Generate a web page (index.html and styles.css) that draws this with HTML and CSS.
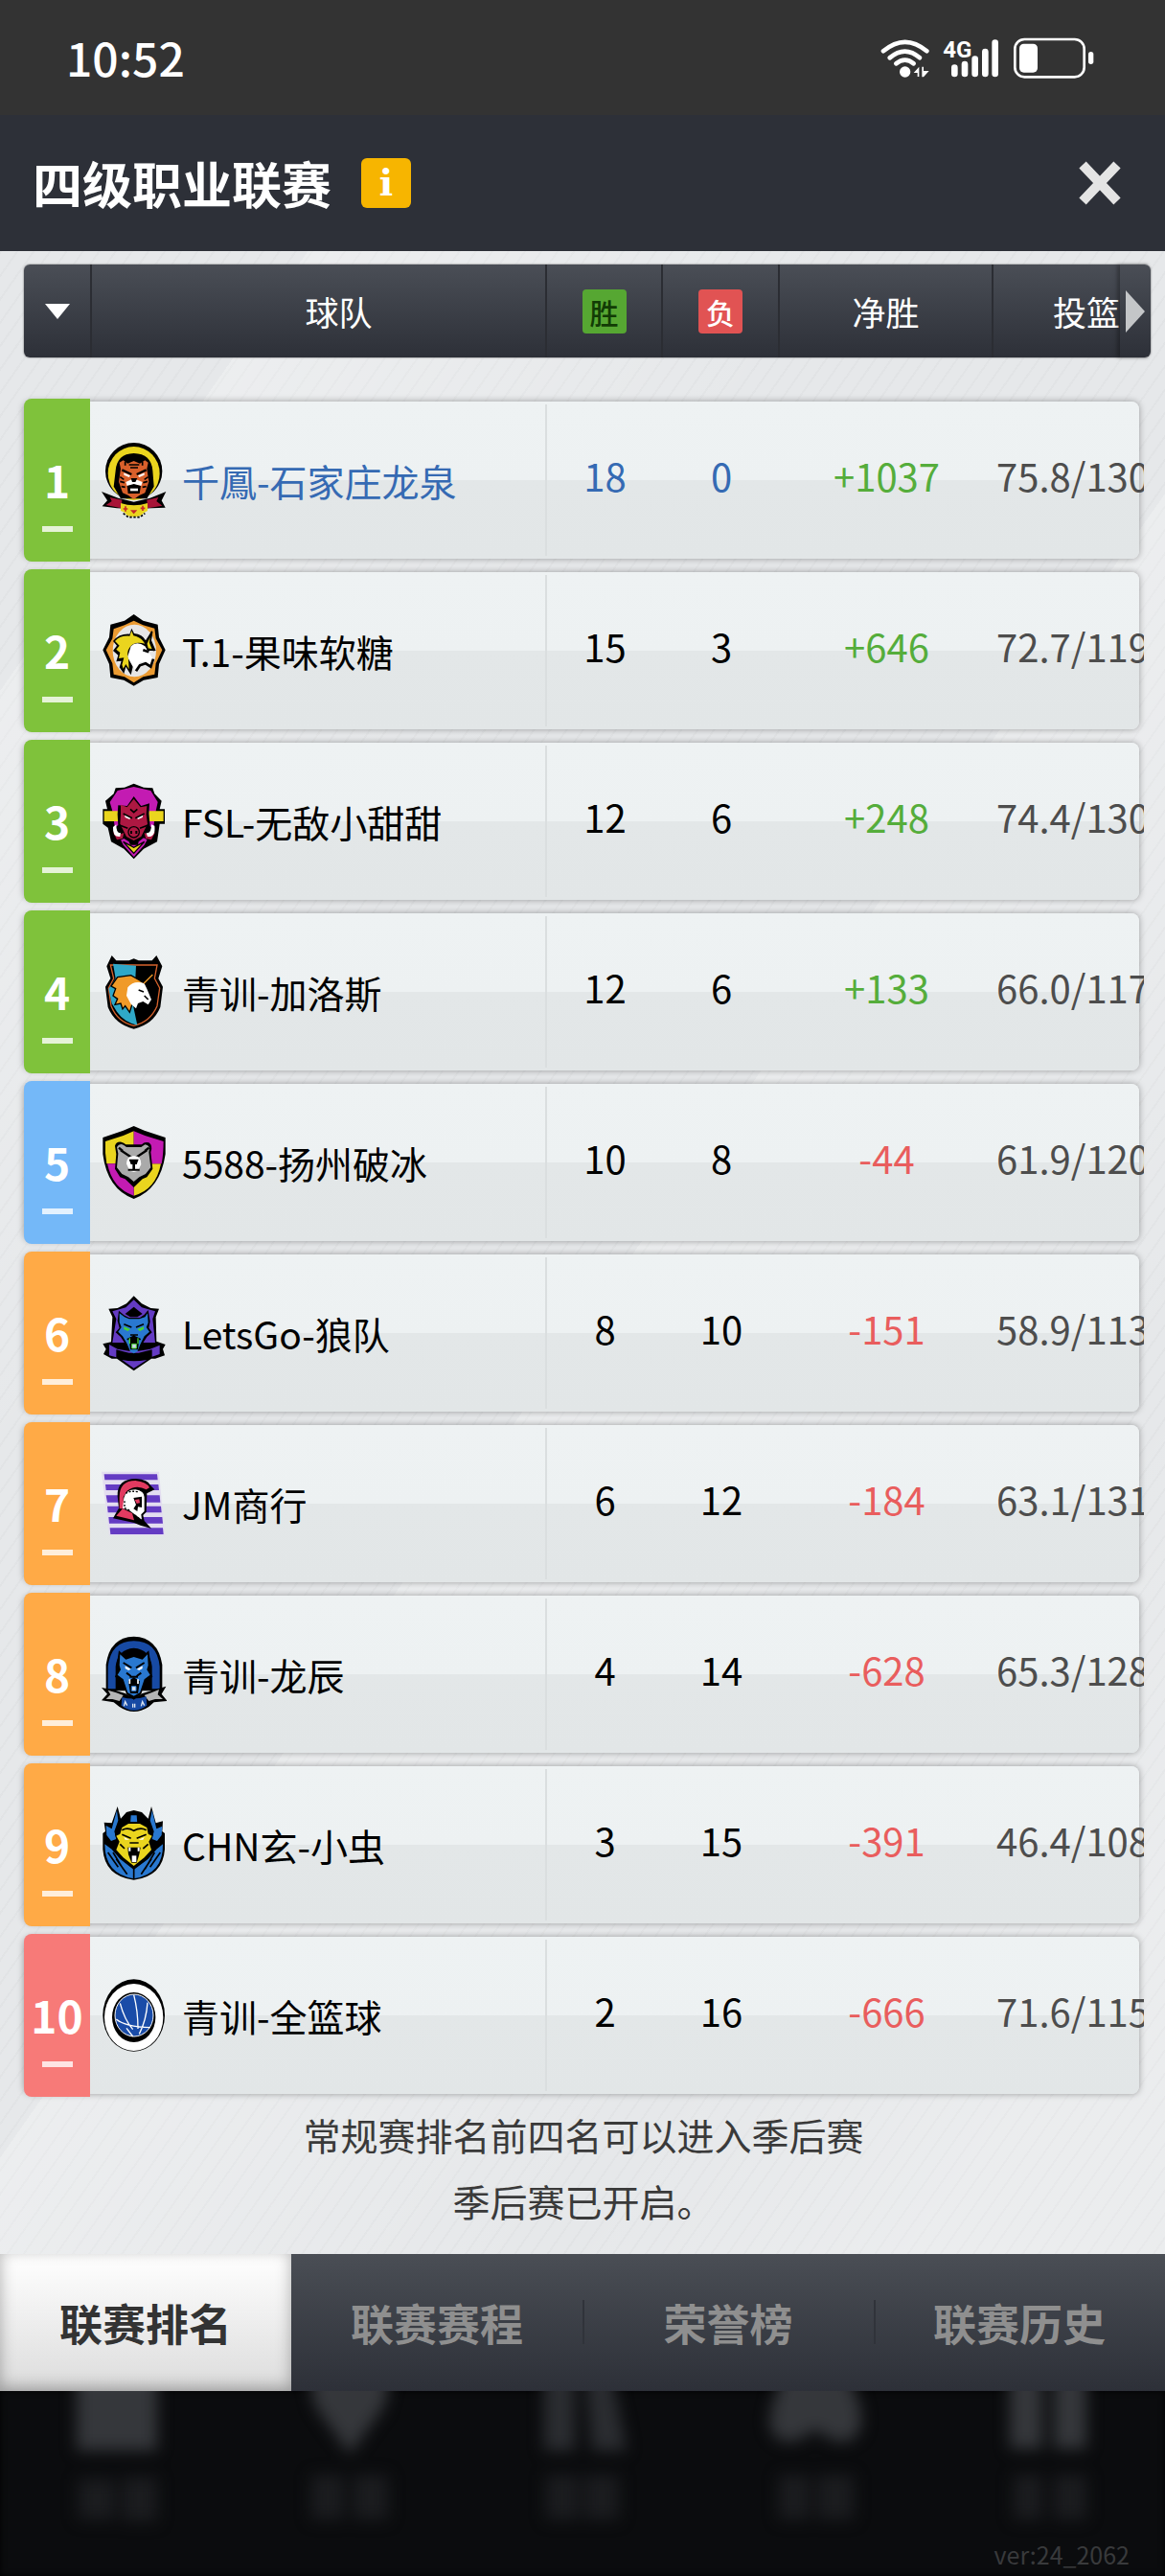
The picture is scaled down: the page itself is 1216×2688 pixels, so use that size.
FILE: index.html
```html
<!DOCTYPE html>
<html lang="zh-CN">
<head>
    <meta charset="UTF-8">
    <meta name="viewport" content="width=device-width, initial-scale=1.0">
    <title>四级职业联赛</title>
    <link rel="stylesheet" href="styles.css">
</head>
<body>
    <div class="status-bar">
        <span class="clock">10:52</span>
        <svg class="status-icons" viewBox="120 56 672 136" aria-hidden="true">
            <g fill="none" stroke="#fff" stroke-linecap="round">
                <path d="M129 101Q197 44 265 101" stroke-width="14"/>
                <path d="M149 122Q197 82 243 122" stroke-width="14"/>
                <path d="M169 140Q197 118 224 140" stroke-width="14"/>
                <path d="M352 153v19M384 142v30M416 126v46M448 103v69M479 75v97" stroke-width="20"/>
            </g>
            <circle cx="197" cy="166" r="17" fill="#fff"/>
            <path d="M224 169l17-19v31h-5v-12zM250 150h5v13h17l-17 19h-5z" fill="#fff"/>
            <text class="network" x="316" y="122">4G</text>
            <rect x="541" y="64" width="217" height="118" rx="30" fill="none" stroke="#fff" stroke-width="8"/>
            <rect x="555" y="78" width="57" height="90" rx="14" fill="#fff"/>
            <rect x="771" y="103" width="16" height="39" rx="8" fill="#fff"/>
        </svg>
    </div>

    <header class="title-bar">
        <h1>四级职业联赛</h1>
        <button class="info-button" type="button" aria-label="说明">i</button>
        <button class="close-button" type="button" aria-label="关闭">
            <svg viewBox="0 0 48 48"><path d="M6 5L42 43M42 5L6 43" stroke="#e4e4e4" stroke-width="10"/></svg>
        </button>
    </header>

    <main class="content">
        <table class="standings">
            <thead>
                <tr>
                    <th><button class="sort-button" type="button" aria-label="排序"><svg viewBox="0 0 26 16"><path d="M0 0h26L13 16z" fill="#fff"/></svg></button></th>
                    <th class="team-head">球队</th>
                    <th><span class="badge win">胜</span></th>
                    <th><span class="badge loss">负</span></th>
                    <th>净胜</th>
                    <th class="shooting-head">投篮</th>
                    <th class="next-head"><button class="next-button" type="button" aria-label="更多"><svg viewBox="0 0 20 44"><path d="M0 0L20 22L0 44z" fill="#c4c6c8"/></svg></button></th>
                </tr>
            </thead>
            <tbody>
                <tr class="playoff mine">
                    <td class="rank">1</td>
                    <td class="team">
                        <svg class="logo" viewBox="48 90 204 240">
                            <ellipse cx="149" cy="182" rx="89" ry="89" fill="#000"/>
                            <ellipse cx="149" cy="189" rx="81" ry="84" fill="#ead51e"/>
                            <path d="M92 180Q96 128 149 126Q204 128 208 180L212 230L190 268H108L86 230z" fill="#000"/>
                            <path d="M104 155L116 148L130 158L149 150L168 158L184 148L194 155L190 175L196 215L184 250L166 258L149 270L132 258L114 250L102 215L108 175z" fill="#d9602b"/>
                            <path d="M134 162h32M138 171h24M106 200l12 8M194 200l-12 8M106 214l14 4M192 214l-14 4M110 230l12 2M188 230l-12 2M122 152v12M176 152v12" stroke="#000" stroke-width="5"/>
                            <path d="M118 187l20 9l-4 5l-16-7zM182 187l-20 9l4 5l16-7z" fill="#fff"/>
                            <path d="M112 178l30 14M188 178l-30 14" stroke="#000" stroke-width="7"/>
                            <path d="M124 216l18-8h14l20 8l-4 12l-22-4l-22 4z" fill="#fff"/>
                            <path d="M140 204h20l-6 12h-10zM128 228l21-6l22 6l-4 24h-36z" fill="#000"/>
                            <path d="M138 236h24v8h-24z" fill="#fff"/>
                            <path d="M48 246L100 266L149 278L200 266L250 246L236 274L248 296L204 298L149 300L96 298L50 292L66 274z" fill="#000"/>
                            <path d="M74 264L112 272L110 298L62 288L80 276zM226 264L190 272L192 298L238 290L220 276z" fill="#a81438"/>
                            <path d="M108 282Q149 296 192 282V306Q178 312 172 320Q149 330 128 320Q122 310 108 306z" fill="#ead51e"/>
                            <path d="M116 300h14M123 292v16M170 298h14M177 290v16" stroke="#c62828" stroke-width="5"/>
                            <path d="M138 304h22l-11 12z" fill="#c62828"/>
                            <path d="M116 314L132 326H168L184 314" fill="none" stroke="#000" stroke-width="5" stroke-dasharray="7 5"/>
                        </svg>
                        <a href="#">千鳳-石家庄龙泉</a>
                    </td>
                    <td>18</td>
                    <td>0</td>
                    <td class="plus">+1037</td>
                    <td class="shooting">75.8/130</td>
                </tr>
                <tr class="playoff">
                    <td class="rank">2</td>
                    <td class="team">
                        <svg class="logo" viewBox="48 624 204 240">
                            <path d="M149 630L178 650L224 662L228 702L248 742L228 786L224 828L180 836L149 854L118 836L76 828L72 786L52 742L72 702L76 662L120 650z" fill="#000"/>
                            <path d="M149 650L178 664L214 674L218 706L238 742L218 784L214 818L178 826L149 844L120 826L86 818L82 784L62 742L82 706L86 676L120 664z" fill="#eb9b32"/>
                            <ellipse cx="151" cy="744" rx="68" ry="82" fill="#e6e6e6"/>
                            <path d="M84 714Q104 690 136 692L142 674L150 690Q176 692 186 712L206 680L204 712L218 744L192 744L172 726L140 740L130 766L146 794L140 820L124 794L118 816L104 796L110 776L94 778L100 758L84 744L96 728z" fill="#000"/>
                            <path d="M90 714Q106 696 136 698L142 682L148 697Q166 700 178 714L184 722Q150 712 136 734Q126 746 132 768L134 802L124 786L116 800L112 788L118 766L102 768L106 750L94 740L104 728z" fill="#ead51e"/>
                            <path d="M140 730Q158 712 184 730L210 772L202 788L184 778L168 780L152 804L140 780L130 762z" fill="#fff"/>
                            <path d="M178 742l18 6M210 770l-8 24l-16-10l-18 6l-12 18" fill="none" stroke="#000" stroke-width="8"/>
                            <path d="M188 722L206 684L200 718L210 742L192 738z" fill="#ead51e" stroke="#000" stroke-width="5"/>
                        </svg>
                        <a href="#">T.1-果味软糖</a>
                    </td>
                    <td>15</td>
                    <td>3</td>
                    <td class="plus">+646</td>
                    <td class="shooting">72.7/119</td>
                </tr>
                <tr class="playoff">
                    <td class="rank">3</td>
                    <td class="team">
                        <svg class="logo" viewBox="48 78 204 240">
                            <path d="M92 94L120 92L149 80L180 92L208 94L214 112L236 134L230 160H246V206H230L222 262L180 284L149 316L118 284L78 262L68 218L52 206V160H66L60 134L86 112z" fill="#000"/>
                            <path d="M98 102L149 90L202 102L224 138L218 166L210 220L182 272L149 310L116 272L90 220L82 166L74 138z" fill="#c31bb2"/>
                            <path d="M56 166H106V198H56zM196 166H242V198H196z" fill="#ead51e"/>
                            <path d="M116 262L149 298L182 262L149 280z" fill="#ead51e" stroke="#000" stroke-width="4"/>
                            <path d="M100 148L128 150L149 120L172 150L198 142L196 174L200 214L216 226L220 246L202 262L180 250L164 262L162 272H138L134 262L118 252L98 262L80 248L80 224L100 210L98 176z" fill="#000"/>
                            <path d="M108 146L128 154L149 128L170 154L190 150L188 176L192 206L172 246L149 258L126 246L106 206L108 176zM84 232L102 240L118 234L114 252L96 256zM216 232L198 240L182 234L186 252L204 256z" fill="#ad1842"/>
                            <path d="M84 216Q82 248 106 246L108 234Q94 238 94 208zM214 212Q218 248 192 246L188 234Q204 238 204 208z" fill="#fff"/>
                            <path d="M120 178l20 8l-4 6l-14-6zM178 178l-20 8l4 6l14-6z" fill="#fff"/>
                            <path d="M116 174l28 14M182 174l-28 14M138 160l11 10l11-10M104 210l26 10M194 210l-26 10" fill="none" stroke="#000" stroke-width="5"/>
                            <circle cx="149" cy="232" r="19" fill="#000"/>
                            <circle cx="149" cy="232" r="15" fill="#ad1842"/>
                            <path d="M141 228v9M157 228v9" stroke="#000" stroke-width="6"/>
                        </svg>
                        <a href="#">FSL-无敌小甜甜</a>
                    </td>
                    <td>12</td>
                    <td>6</td>
                    <td class="plus">+248</td>
                    <td class="shooting">74.4/130</td>
                </tr>
                <tr class="playoff">
                    <td class="rank">4</td>
                    <td class="team">
                        <svg class="logo" viewBox="48 612 204 240">
                            <path d="M80 618L94 634H134L149 628L164 634H206L220 618L238 652L226 690L240 716L232 780Q210 834 149 848Q90 834 68 780L60 716L76 690L64 652z" fill="#000"/>
                            <path d="M76 648H222L214 690L230 720L222 776Q200 826 149 838Q98 826 78 776L70 720L86 690z" fill="none" stroke="#d6622c" stroke-width="4"/>
                            <path d="M84 644L156 650L154 690L138 720L148 780L160 836Q118 826 96 794L80 768L70 722L92 690z" fill="#2fa8c8"/>
                            <path d="M78 714L98 686L140 680L178 702L168 726L138 738L144 770L136 796L122 776L114 786L108 768L90 772L98 754L84 744L92 722z" fill="#f09a28" stroke="#000" stroke-width="4"/>
                            <path d="M130 718Q150 694 182 706L190 722L204 756L194 772L178 762L162 768L156 784L140 770L126 744z" fill="#fff"/>
                            <path d="M164 726l16 6M170 700L206 680M182 744l12 12" stroke="#000" stroke-width="5"/>
                            <path d="M180 706L208 678" stroke="#f09a28" stroke-width="4"/>
                        </svg>
                        <a href="#">青训-加洛斯</a>
                    </td>
                    <td>12</td>
                    <td>6</td>
                    <td class="plus">+133</td>
                    <td class="shooting">66.0/117</td>
                </tr>
                <tr class="safe">
                    <td class="rank">5</td>
                    <td class="team">
                        <svg class="logo" viewBox="48 96 204 240">
                            <path d="M149 102L182 116L248 138V190Q232 300 149 330Q66 300 52 190V138L116 116z" fill="#000"/>
                            <path d="M149 118V220H64Q58 186 60 150L116 132zM149 220H234Q218 302 149 320z" fill="#ead51e"/>
                            <path d="M149 118L184 132L242 150Q242 190 236 220H149zM149 220V320Q82 298 66 220z" fill="#c31bb2"/>
                            <path d="M90 164Q94 150 110 152Q118 154 124 160H174Q182 150 196 154Q210 164 202 184L208 236L190 262L176 268L149 294L122 268L106 262L90 236L94 190z" fill="#000"/>
                            <path d="M96 168Q104 154 118 162L126 168H172L184 160Q202 162 196 184L202 232L186 252L166 262L149 276L132 262L112 252L96 232L100 188z" fill="#aaa"/>
                            <path d="M108 178L142 200M190 178L156 200M102 170l12 10M196 170l-12 10" stroke="#000" stroke-width="7"/>
                            <path d="M126 220Q128 194 149 196Q172 194 172 222L162 242L149 246L136 242z" fill="#fff"/>
                            <path d="M134 206h30l-6 16h-5v14h14v6h-36v-6h14v-14h-5z" fill="#000"/>
                        </svg>
                        <a href="#">5588-扬州破冰</a>
                    </td>
                    <td>10</td>
                    <td>8</td>
                    <td class="minus">-44</td>
                    <td class="shooting">61.9/120</td>
                </tr>
                <tr class="playout">
                    <td class="rank">6</td>
                    <td class="team">
                        <svg class="logo" viewBox="48 630 204 240">
                            <path d="M149 634L174 658L202 672L228 674L218 700L220 776L248 786L240 800L246 820L216 830H204L149 868L96 830H80L54 816L62 800L52 784L78 778L82 700L70 674L98 672L126 658z" fill="#000"/>
                            <path d="M149 646L174 670L216 682L208 706L216 780H82L94 706L82 682L124 670z" fill="#643bc3"/>
                            <path d="M149 668L176 690L160 700H138L122 690z" fill="#000"/>
                            <path d="M102 680L118 694L134 702H168L182 692L194 678L200 714L196 734L206 748L190 762L176 784L164 812L149 822L134 812L122 784L108 762L92 748L104 734L98 712z" fill="#000"/>
                            <path d="M72 786V820L94 826V802L116 808L134 812H164L206 802V824L230 816V788L200 800L164 806H134L98 800zM112 834Q149 842 190 834L149 860z" fill="#643bc3"/>
                            <path d="M104 688L120 700L134 706H166L184 700L192 688L194 718L188 732L198 746L182 760L170 784L160 808L149 814L138 808L128 784L114 760L100 746L110 732L104 716z" fill="#2978d0"/>
                            <path d="M118 722l24 10M180 722l-24 10M138 756h24M128 770L149 760L170 770" fill="none" stroke="#000" stroke-width="5"/>
                            <path d="M118 730l20 8l-8 6l-12-6zM180 730l-20 8l8 6l12-6z" fill="#49d333"/>
                            <path d="M134 768L149 760L166 768L162 802H138z" fill="#000"/>
                            <path d="M136 766v18M162 766v18" stroke="#49d333" stroke-width="4"/>
                            <path d="M143 784h14v14h-14z" fill="#c8d9e8" stroke="#49d333" stroke-width="3"/>
                        </svg>
                        <a href="#">LetsGo-狼队</a>
                    </td>
                    <td>8</td>
                    <td>10</td>
                    <td class="minus">-151</td>
                    <td class="shooting">58.9/113</td>
                </tr>
                <tr class="playout">
                    <td class="rank">7</td>
                    <td class="team">
                        <svg class="logo" viewBox="48 84 204 240">
                            <path d="M48 104H228L246 304H72z" fill="#e3ddf0"/>
                            <path d="M56 112H222L224 130H58zM60 144H226L228 162H62zM62 178H230L232 200H66zM66 212H234L236 232H68zM70 246H238L240 266H72zM74 280H240L242 300H76z" fill="#643bc3"/>
                            <path d="M98 180Q96 126 156 126Q194 128 202 148L214 160L190 172L188 230L178 240L182 258L204 282L170 272L150 264L84 250L102 218z" fill="#000"/>
                            <path d="M104 184Q104 132 154 132Q190 136 198 154L188 160Q156 142 128 164L116 184L118 220L104 220zM94 242L114 220L144 234L150 256z" fill="#e13a60"/>
                            <path d="M118 186Q124 160 154 160Q182 164 182 184L182 228L172 238L174 254L152 238L136 226L114 218z" fill="#fff"/>
                            <path d="M148 186L174 182L174 216L162 214L160 228L148 220L156 208z" fill="#000"/>
                            <path d="M152 192l14-2l2 12l-10 2z" fill="#e13a60"/>
                            <path d="M124 172q14-10 42-4M120 196v22l18 8M152 240l30 24" fill="none" stroke="#000" stroke-width="4" stroke-dasharray="6 5"/>
                        </svg>
                        <a href="#">JM商行</a>
                    </td>
                    <td>6</td>
                    <td>12</td>
                    <td class="minus">-184</td>
                    <td class="shooting">63.1/131</td>
                </tr>
                <tr class="playout">
                    <td class="rank">8</td>
                    <td class="team">
                        <svg class="logo" viewBox="48 618 204 240">
                            <path d="M62 790V708Q74 622 149 620Q224 622 238 708V790z" fill="#000"/>
                            <path d="M68 784V714Q78 634 149 634Q222 634 230 714V784H206V714Q200 660 149 656Q98 660 92 714V784z" fill="#174aa4"/>
                            <path d="M48 780L90 788L122 798L149 814L176 798L208 788L250 776L236 800L254 822L212 826L196 840Q149 870 104 840L86 826L48 820L66 800z" fill="#000"/>
                            <path d="M68 788L94 796L116 804L104 822L82 816L62 816L76 802zM228 786L204 796L182 804L196 822L216 816L240 816L224 802z" fill="#b5b5b5"/>
                            <path d="M112 810Q149 820 188 808L190 836Q149 866 110 836z" fill="#174aa4"/>
                            <path d="M102 664L122 682H176L196 664L202 706L198 722L208 746L184 764L172 800L149 818L126 800L114 764L90 746L100 722L96 706z" fill="#000"/>
                            <path d="M106 676L124 692L149 684L176 692L192 676L194 710L190 724L200 740L182 754L168 796L149 806L130 796L116 754L98 740L108 724L104 710z" fill="#2978d0"/>
                            <path d="M116 702l26 16M182 702l-26 16M136 746h26M126 734l14 10M172 734l-14 10" stroke="#000" stroke-width="6"/>
                            <path d="M122 712l18 10l-8 4l-10-6zM176 712l-18 10l8 4l10-6z" fill="#fff"/>
                            <path d="M132 760L149 748L168 760L162 798H138z" fill="#000"/>
                            <path d="M136 754v14M162 754v14" stroke="#fff" stroke-width="5"/>
                            <path d="M142 776h14v14h-14z" fill="#dbe3ee" stroke="#2978d0" stroke-width="3"/>
                            <path d="M118 838l4-14l6 12M146 830v12M152 830v12M172 838l4-14l6 12" fill="none" stroke="#dbe3ee" stroke-width="4"/>
                        </svg>
                        <a href="#">青训-龙辰</a>
                    </td>
                    <td>4</td>
                    <td>14</td>
                    <td class="minus">-628</td>
                    <td class="shooting">65.3/128</td>
                </tr>
                <tr class="playout">
                    <td class="rank">9</td>
                    <td class="team">
                        <svg class="logo" viewBox="48 72 204 240">
                            <path d="M98 72L108 110L126 90L149 84L174 90L194 110L204 72L218 124L240 118L238 150L246 156L246 206Q240 290 149 302Q58 290 52 206V156L60 150L56 122L80 124z" fill="#000"/>
                            <path d="M96 84L100 116L88 150L94 174L78 180L64 162L62 132L80 142zM206 84L200 116L212 150L206 174L222 180L236 162L238 134L220 142zM140 100h18l2 26h-22zM58 190L80 206L106 236L149 270L194 236L220 206L240 190Q242 284 149 298Q58 284 58 190z" fill="#2978d0"/>
                            <path d="M68 216L100 262M84 216L116 268M94 236L128 284M232 216L200 262M214 216L184 268M204 236L172 284M149 262V300" stroke="#000" stroke-width="5"/>
                            <path d="M104 136L128 120H172L198 136L210 160L202 180L210 212L188 240L149 268L112 240L88 212L96 180L90 160z" fill="#000"/>
                            <path d="M112 138L132 126H168L190 138L194 158L206 164L196 182L204 208L182 232L149 258L116 232L94 208L104 182L94 164L106 158z" fill="#ead51e"/>
                            <path d="M112 146Q130 136 149 148Q170 136 188 146M112 160L140 172M188 160L158 172M136 186H164M106 190L120 204M194 190L178 204" fill="none" stroke="#000" stroke-width="5"/>
                            <path d="M118 168l18 8h-14zM182 168l-18 8h14z" fill="#fff"/>
                            <path d="M130 200H170L166 222L158 248H142L132 222z" fill="#000"/>
                            <path d="M136 200v12M164 200v12" stroke="#fff" stroke-width="6"/>
                            <path d="M143 226h14v20h-14z" fill="#fff"/>
                        </svg>
                        <a href="#">CHN玄-小虫</a>
                    </td>
                    <td>3</td>
                    <td>15</td>
                    <td class="minus">-391</td>
                    <td class="shooting">46.4/108</td>
                </tr>
                <tr class="relegated">
                    <td class="rank">10</td>
                    <td class="team">
                        <svg class="logo" viewBox="48 606 204 240">
                            <ellipse cx="149" cy="726" rx="97" ry="113" fill="#000"/>
                            <ellipse cx="149" cy="732" rx="92" ry="105" fill="#fff"/>
                            <ellipse cx="149" cy="732" rx="68" ry="78" fill="#000"/>
                            <ellipse cx="150" cy="726" rx="60" ry="66" fill="#1a4ca8" stroke="#fff" stroke-width="3"/>
                            <path d="M149 662Q162 712 162 768M106 688Q120 740 146 770M192 686Q188 742 166 784M94 738Q122 762 200 764M126 766L146 792" fill="none" stroke="#fff" stroke-width="4"/>
                        </svg>
                        <a href="#">青训-全篮球</a>
                    </td>
                    <td>2</td>
                    <td>16</td>
                    <td class="minus">-666</td>
                    <td class="shooting">71.6/115</td>
                </tr>
            </tbody>
        </table>
        <p class="notice">常规赛排名前四名可以进入季后赛<br>季后赛已开启。</p>
    </main>

    <nav class="tabs">
        <button class="tab active" type="button">联赛排名</button>
        <button class="tab" type="button">联赛赛程</button>
        <button class="tab" type="button">荣誉榜</button>
        <button class="tab" type="button">联赛历史</button>
    </nav>

    <footer class="dock">
        <div class="dock-icons" aria-hidden="true">
            <svg viewBox="0 0 120 150"><path d="M18 -30H102V62H18z"/><path class="dim" d="M20 92h38v42H20zM66 90h36v46H66z"/></svg>
            <svg viewBox="0 0 120 150"><path d="M14 -30H106L96 16L60 66L24 16z"/><path class="dim" d="M20 88h34v46H20zM64 88h36v46H64z"/></svg>
            <svg viewBox="0 0 120 150"><path class="mid" d="M20 -30H52V62H20zM62 -30H88L106 62H70z"/><path class="dim" d="M22 88h34v46H22zM62 88h36v46H62z"/></svg>
            <svg viewBox="0 0 120 150"><path d="M34 -30H86Q110 10 108 36Q96 68 60 40Q24 68 12 36Q14 6 34 -30z"/><path class="dim" d="M22 88h32v46H22zM62 88h38v46H62z"/></svg>
            <svg viewBox="0 0 120 150"><path d="M20 -30H54V60H20zM66 -30H100V60H66z"/><path class="dim" d="M24 88h30v46H24zM66 88h34v46H66z"/></svg>
        </div>
        <span class="version">ver:24_2062</span>
    </footer>
</body>
</html>
```
FILE: styles.css
```css
* {
    box-sizing: border-box;
}
body {
    margin: 0;
    min-height: 100vh;
    display: flex;
    flex-direction: column;
    background-color: #0b0c0e;
    font-family: "Noto Sans CJK SC", "Noto Sans", sans-serif;
    font-size: 39px;
    color: #000;
}
button {
    border: none;
    background: none;
    padding: 0;
    margin: 0;
    font-family: inherit;
    color: inherit;
    cursor: pointer;
}
a {
    color: inherit;
    text-decoration: none;
}
svg {
    display: block;
}

/* status bar */
.status-bar {
    height: 120px;
    flex: none;
    display: flex;
    align-items: center;
    justify-content: space-between;
    padding: 2px 73px 0 69px;
    background-color: #333;
    color: #fff;
}
.clock {
    padding-bottom: 4px;
    font-size: 48px;
    font-weight: 500;
    line-height: 60px;
}
.status-icons {
    width: 224px;
    height: 46px;
}
.network {
    font-family: Roboto, sans-serif;
    font-size: 72px;
    font-weight: bold;
    fill: #fff;
}

/* title bar */
.title-bar {
    height: 142px;
    flex: none;
    display: flex;
    align-items: center;
    padding: 0 44px 0 34px;
    background-color: #2d3038;
    color: #fff;
}
.title-bar h1 {
    margin: 0;
    font-size: 52px;
    line-height: 64px;
    font-weight: bold;
}
.info-button {
    width: 52px;
    height: 52px;
    margin-left: 31px;
    border-radius: 6px;
    background-color: #f7b500;
    color: #fff;
    font-family: "DejaVu Serif", serif;
    font-size: 38px;
    font-weight: bold;
    line-height: 52px;
}
.close-button {
    margin-left: auto;
}
.close-button svg {
    width: 48px;
    height: 48px;
}

/* standings */
.content {
    flex: none;
    padding: 14px 15px 0 25px;
    background-color: #e6e8ea;
    background-image:
        linear-gradient(125deg, transparent 12%, rgba(255, 255, 255, 0.25) 12%, transparent 34%, transparent 52%, rgba(255, 255, 255, 0.25) 52%, transparent 76%, rgba(255, 255, 255, 0.2) 90%),
        repeating-linear-gradient(125deg, rgba(0, 0, 0, 0.02) 0, rgba(0, 0, 0, 0.02) 2px, transparent 2px, transparent 14px);
}
.standings,
.standings thead,
.standings tbody {
    display: block;
}
.standings tr {
    display: grid;
    grid-template-columns: 71px minmax(0, 1fr) 121px 122px 223px 152px;
    align-items: center;
}
.standings thead tr {
    grid-template-columns: 71px minmax(0, 1fr) 121px 122px 223px 132px 32px;
    height: 97px;
    margin-bottom: 46px;
    border-radius: 6px;
    background: linear-gradient(#4a4e56, #2d3038);
    box-shadow: 0 0 2px #555;
}
.standings th {
    height: 97px;
    padding: 0;
    display: flex;
    align-items: center;
    justify-content: center;
    border-right: 2px solid #2b2d33;
    color: #fff;
    font-size: 35px;
    font-weight: normal;
}
.standings th.team-head {
    padding-left: 42px;
}
.standings th.shooting-head {
    justify-content: flex-end;
    border-right: none;
}
.standings th.next-head {
    border-right: none;
    box-shadow: -3px 0 4px rgba(0, 0, 0, 0.3);
}
.sort-button svg {
    width: 26px;
    height: 16px;
}
.next-button svg {
    width: 20px;
    height: 44px;
}
.badge {
    width: 46px;
    height: 46px;
    border-radius: 4px;
    font-size: 30px;
    font-weight: 500;
    line-height: 46px;
    text-align: center;
}
.badge.win {
    background-color: #56a732;
    color: #123c05;
}
.badge.loss {
    background-color: #e15353;
}
.standings tbody tr {
    height: 164px;
    margin: 0 12px 14px 0;
    border-radius: 8px;
    background: linear-gradient(#eef2f3, #edf1f2 50%, #e3e7e8 50%, #e2e6e7);
    box-shadow: 0 0 7px rgba(0, 0, 0, 0.35);
}
.standings tbody tr:last-child {
    margin-bottom: 0;
}
.standings td {
    padding: 0 0 11px;
    font-size: 40px;
    line-height: 48px;
    text-align: center;
}
.standings td.rank {
    align-self: stretch;
    width: 69px;
    margin: -3px 0;
    padding: 56px 0 0;
    border-radius: 8px 0 0 8px;
    color: #fff;
    font-size: 46px;
    font-weight: bold;
    line-height: 56px;
}
.rank::after {
    content: "";
    display: block;
    width: 32px;
    height: 6px;
    margin: 21px auto 0;
    background-color: rgba(255, 255, 255, 0.8);
}
.playoff .rank {
    background-color: #7fc23b;
}
.safe .rank {
    background-color: #74b8f8;
}
.playout .rank {
    background-color: #ffaa46;
}
.relegated .rank {
    background-color: #f77a78;
}
.standings td.team {
    height: 158px;
    display: flex;
    align-items: center;
    gap: 16px;
    padding: 0 0 0 10px;
    border-right: 2px solid #dadedf;
    font-size: 39px;
    white-space: nowrap;
}
.logo {
    width: 68px;
    height: 80px;
    flex: none;
}
.mine {
    color: #356ab3;
}
.plus {
    color: #55ad3b;
}
.minus {
    color: #e95d5d;
}
.standings td.shooting {
    margin-right: -5px;
    padding-left: 3px;
    overflow: hidden;
    color: #4d4d4d;
    text-align: left;
    white-space: nowrap;
}
.notice {
    margin: 0;
    padding: 8px 8px 21px 0;
    color: #3a3a3a;
    font-size: 39px;
    line-height: 69px;
    text-align: center;
}

/* bottom tabs */
.tabs {
    flex: none;
    display: grid;
    grid-template-columns: repeat(4, 1fr);
    height: 143px;
    background: linear-gradient(#4a4e55, #2d3038);
}
.tab {
    position: relative;
    color: #8f8f8f;
    font-size: 45px;
    font-weight: bold;
}
.tab.active {
    background: linear-gradient(#fff, #dcdcdc);
    box-shadow: inset 0 -4px 16px rgba(0, 0, 0, 0.3);
    color: #333;
}
.tab + .tab + .tab::before {
    content: "";
    position: absolute;
    left: 0;
    top: 48px;
    width: 2px;
    height: 46px;
    background-color: #30333a;
}

/* dimmed dock below the dialog */
.dock {
    flex: 1;
    min-height: 190px;
    display: flex;
    flex-direction: column;
    justify-content: space-between;
    overflow: hidden;
    background-color: #0b0c0e;
    box-shadow: inset 0 0 6px #000;
}
.dock-icons {
    height: 150px;
    display: grid;
    grid-template-columns: repeat(5, 1fr);
    justify-items: center;
}
.dock-icons svg {
    width: 120px;
    height: 150px;
    overflow: visible;
    fill: #35373b;
    filter: blur(8px);
}
.dock-icons .mid {
    fill: #2b2d31;
}
.dock-icons .dim {
    fill: #1b1c1f;
}
.version {
    align-self: flex-end;
    padding: 0 37px 6px 0;
    color: #393a3c;
    font-size: 25px;
    line-height: 34px;
}
```
